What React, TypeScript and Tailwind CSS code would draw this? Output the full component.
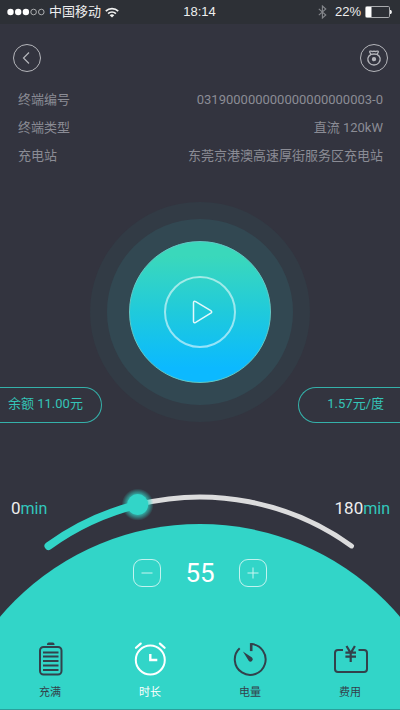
import { useState } from "react";
import type { ReactNode } from "react";

const MAX_MINUTES = 180;

// Geometry of the duration arc, in units of the dial's 400 x 87 view box.
const ARC = { cx: 200, cy: 284, r: 259, half: 35.8 };

function pointAt(minutes: number) {
  const deg = -ARC.half + (minutes / MAX_MINUTES) * ARC.half * 2;
  const rad = (deg * Math.PI) / 180;
  return { x: ARC.cx + ARC.r * Math.sin(rad), y: ARC.cy - ARC.r * Math.cos(rad) };
}

function arcPath(from: number, to: number) {
  const a = pointAt(from);
  const b = pointAt(to);
  return `M${a.x} ${a.y}A${ARC.r} ${ARC.r} 0 0 1 ${b.x} ${b.y}`;
}

function StatusBar() {
  return (
    <div className="grid h-6 grid-cols-[1fr_auto_1fr] items-center bg-[#2d3036] pr-2 pl-[7px] font-['Liberation_Sans','Noto_Sans_CJK_SC',sans-serif] text-[13px] leading-6 text-[#eeeeee]">
      <div className="flex items-center">
        <svg width="38" height="8" viewBox="0 0 38 8" aria-hidden="true">
          <g fill="#fff">
            <circle cx="3.5" cy="4" r="3.2" />
            <circle cx="11.2" cy="4" r="3.2" />
            <circle cx="18.9" cy="4" r="3.2" />
          </g>
          <g fill="none" stroke="#c9cacc" strokeWidth="0.8">
            <circle cx="26.6" cy="4" r="2.8" />
            <circle cx="34.3" cy="4" r="2.8" />
          </g>
        </svg>
        <span className="ml-1">中国移动</span>
        <svg className="ml-1" width="14" height="11" viewBox="0 0 14 11" fill="none" stroke="#f2f2f2" strokeWidth="1.7" aria-hidden="true">
          <path d="M0.8 4.1a8.8 8.8 0 0 1 12.4 0" />
          <path d="M3.1 6.6a5.5 5.5 0 0 1 7.8 0" />
          <path d="M7 10.6 4.7 8.3a3.3 3.3 0 0 1 4.6 0z" fill="#f2f2f2" stroke="none" />
        </svg>
      </div>
      <span>18:14</span>
      <div className="flex items-center justify-end">
        <svg className="mr-2" width="9" height="14" viewBox="0 0 9 14" fill="none" stroke="#85878c" strokeWidth="1.1" aria-hidden="true">
          <path d="M0.8 3.8 7.8 10 4.4 13V1L7.8 4 0.8 10.2" />
        </svg>
        <span>22%</span>
        <svg className="ml-1" width="27" height="12" viewBox="0 0 27 12" aria-hidden="true">
          <rect x="0.5" y="0.5" width="24" height="11" rx="1.2" fill="none" stroke="#a9abae" />
          <rect x="1" y="1" width="5.5" height="10" fill="#fff" />
          <path d="M25 4h1c1.2 1 1.2 3 0 4h-1z" fill="#eee" />
        </svg>
      </div>
    </div>
  );
}

function InfoRow({ label, value }: { label: string; value: string }) {
  return (
    <div className="flex h-7 items-center justify-between">
      <dt>{label}</dt>
      <dd>{value}</dd>
    </div>
  );
}

function BatteryIcon() {
  return (
    <svg width="36" height="36" viewBox="0 0 36 36" fill="none" stroke="currentColor" strokeWidth="2" aria-hidden="true">
      <rect x="8" y="6" width="21.5" height="27.5" rx="3.5" />
      <path d="M15 4V3.200q0-1.700 1.700-1.700h4.100q1.700 0 1.700 1.700V4z" fill="currentColor" stroke="none" />
      <path d="M11 11.500h15.500M11 15.500h15.500M11 20h15.500M11 24.500h15.500M11 29h15.500" />
    </svg>
  );
}

function AlarmIcon() {
  return (
    <svg width="36" height="36" viewBox="0 0 36 36" fill="none" stroke="currentColor" strokeWidth="2" strokeLinecap="round" aria-hidden="true">
      <circle cx="18.3" cy="19" r="14.5" />
      <path d="M4 6.800 8.700 2.600M32.600 6.800 27.900 2.600" strokeWidth="2.200" />
      <path d="M18.300 13v6h7" strokeLinecap="butt" strokeWidth="2.400" />
    </svg>
  );
}

function GaugeIcon() {
  return (
    <svg width="36" height="36" viewBox="0 0 36 36" fill="none" stroke="currentColor" strokeWidth="2" aria-hidden="true">
      <path d="M7.700 7.200A15.400 15.400 0 1 0 19.100 3.100" />
      <path d="M19.200 2.100v8" strokeWidth="2.600" />
      <path d="M10.900 10.600 20 16.600a2.300 2.300 0 1 1-3.300 3.200z" fill="currentColor" stroke="none" />
    </svg>
  );
}

function CostIcon() {
  return (
    <svg width="36" height="36" viewBox="0 0 36 36" fill="none" stroke="currentColor" strokeWidth="2" aria-hidden="true">
      <path d="M11 9H6a3 3 0 0 0-3 3v16a3 3 0 0 0 3 3h26a3 3 0 0 0 3-3V12a3 3 0 0 0-3-3h-5.500" />
      <path d="m14.500 5 4.200 7 4.200-7M18.700 12v9M13.400 11.700H24M13.400 15.700H24" strokeWidth="2.200" />
    </svg>
  );
}

const MODES: { label: string; icon: ReactNode }[] = [
  { label: "充满", icon: <BatteryIcon /> },
  { label: "时长", icon: <AlarmIcon /> },
  { label: "电量", icon: <GaugeIcon /> },
  { label: "费用", icon: <CostIcon /> },
];

export default function App() {
  const [minutes, setMinutes] = useState(55);
  const [mode, setMode] = useState("时长");
  const knob = pointAt(minutes);
  const change = (next: number) => setMinutes(Math.max(0, Math.min(MAX_MINUTES, next)));

  return (
    <div className="min-h-screen bg-[#33343f]">
      <div className="mx-auto flex min-h-screen max-w-md flex-col overflow-hidden font-[Roboto,'Noto_Sans_CJK_SC',sans-serif] text-[13px]">
        <StatusBar />

        <header className="flex items-center justify-between pt-5 pr-3 pl-[13px] text-[#b5b6bb]">
          <button type="button" aria-label="返回" className="flex size-7 items-center justify-center rounded-full border border-current">
            <svg width="12" height="14" viewBox="0 0 12 14" fill="none" stroke="currentColor" strokeWidth="1.2" aria-hidden="true">
              <path d="M8 1.500 2.500 7 8 12.500" />
            </svg>
          </button>
          <button type="button" aria-label="钱包" className="flex size-7 items-center justify-center rounded-full border border-current">
            <svg width="16" height="18" viewBox="0 0 16 18" fill="none" stroke="currentColor" strokeWidth="1.3" aria-hidden="true">
              <path d="M5 5.300A6.200 5.700 0 1 0 11 5.300" />
              <path d="M5 5.400 3.600 3Q3.800 1.800 5.300 2.200 6.300 2.800 8 2.200 9.700 2.800 10.700 2.200 12.200 1.800 12.400 3L11 5.400Q8 4.600 5 5.400z" />
              <circle cx="8" cy="10.200" r="1.500" fill="currentColor" />
            </svg>
          </button>
        </header>

        <dl className="mt-3.5 pr-[17px] pl-[18px] text-[#8b8c95]">
          <InfoRow label="终端编号" value="031900000000000000000003-0" />
          <InfoRow label="终端类型" value="直流 120kW" />
          <InfoRow label="充电站" value="东莞京港澳高速厚街服务区充电站" />
        </dl>

        <div className="mt-8 flex justify-center">
          <div className="flex size-[220px] items-center justify-center rounded-full bg-[#323b45]">
            <div className="flex size-[186px] items-center justify-center rounded-full bg-[#324852]">
              <button
                type="button"
                aria-label="开始充电"
                className="flex size-[142px] items-center justify-center rounded-full border border-[#62c9c6] bg-linear-to-b from-[#3ad8bb] from-10% via-[#20cadb] to-[#0cb9ff] to-90%"
              >
                <span className="flex size-[72px] items-center justify-center rounded-full border-2 border-white/55">
                  <svg className="ml-1.5" width="22" height="24" viewBox="0 0 22 24" fill="none" stroke="#e3f8fb" strokeWidth="1.5" strokeLinejoin="round" aria-hidden="true">
                    <path d="M1.500 2.800Q1.500 0.400 3.700 1.700L18.800 10.700Q20.600 12 18.800 13.200L3.700 22.300Q1.500 23.500 1.500 21.200z" />
                  </svg>
                </span>
              </button>
            </div>
          </div>
        </div>

        <div className="-mt-[35px] flex justify-between text-[#35c4b8]">
          <p className="flex h-9 w-[102px] items-center rounded-r-full border border-l-0 border-[#35b1aa] pb-0.5 pl-2">余额 11.00元</p>
          <p className="flex h-9 w-[102px] items-center justify-end rounded-l-full border border-r-0 border-[#35b1aa] pr-4 pb-0.5">1.57元/度</p>
        </div>

        <section aria-label="充电设置" className="relative mt-auto overflow-hidden border-b border-[#2a9f9b] pt-6">
          <div className="absolute top-[76px] left-1/2 size-[524px] -translate-x-1/2 rounded-full bg-[#32d5c8]" />

          <div className="relative h-[87px]">
            <div className="flex justify-between pt-6 pr-2.5 pl-[11px] text-[17px] leading-6 text-[#eeeeee]">
              <span>0<span className="text-base text-[#32c9bd]">min</span></span>
              <span>180<span className="text-base text-[#32c9bd]">min</span></span>
            </div>
            <svg className="absolute inset-0 mx-auto" width="400" height="87" viewBox="0 0 400 87" fill="none" strokeLinecap="round" aria-hidden="true">
              <defs>
                <radialGradient id="knob-glow">
                  <stop offset="0.6" stopColor="#32d5c8" stopOpacity="0.8" />
                  <stop offset="1" stopColor="#32d5c8" stopOpacity="0" />
                </radialGradient>
              </defs>
              <path d={arcPath(minutes, MAX_MINUTES)} stroke="#dcdcdd" strokeWidth="5" />
              <path d={arcPath(0, minutes)} stroke="#32d5c8" strokeWidth="8" />
              <circle cx={knob.x} cy={knob.y} r="16" fill="url(#knob-glow)" />
              <circle cx={knob.x} cy={knob.y} r="10.5" fill="#32d5c8" />
            </svg>
            <input
              type="range"
              aria-label="充电时长"
              min={0}
              max={MAX_MINUTES}
              value={minutes}
              onChange={(e) => change(Number(e.target.value))}
              className="absolute inset-x-12 top-4 h-14 cursor-pointer opacity-0"
            />
          </div>

          <div className="relative flex items-center justify-center text-white">
            <button type="button" aria-label="减少" onClick={() => change(minutes - 1)} className="flex size-7 items-center justify-center rounded-[9px] border border-white/70">
              <svg width="12" height="12" viewBox="0 0 12 12" stroke="#c9f5f1" aria-hidden="true">
                <path d="M0.500 6h11" />
              </svg>
            </button>
            <output className="w-[78px] text-center text-[26px] leading-7">{minutes}</output>
            <button type="button" aria-label="增加" onClick={() => change(minutes + 1)} className="flex size-7 items-center justify-center rounded-[9px] border border-white/70">
              <svg width="12" height="12" viewBox="0 0 12 12" stroke="#c9f5f1" aria-hidden="true">
                <path d="M0.500 6h11M6 0.500v11" />
              </svg>
            </button>
          </div>

          <nav className="relative mt-[54px] grid grid-cols-4 pb-2">
            {MODES.map(({ label, icon }) => (
              <button
                key={label}
                type="button"
                aria-pressed={mode === label}
                onClick={() => setMode(label)}
                className={`flex flex-col items-center gap-2 text-[11px] leading-4 ${mode === label ? "text-white" : "text-[#33414b]"}`}
              >
                {icon}
                {label}
              </button>
            ))}
          </nav>
        </section>
      </div>
    </div>
  );
}
